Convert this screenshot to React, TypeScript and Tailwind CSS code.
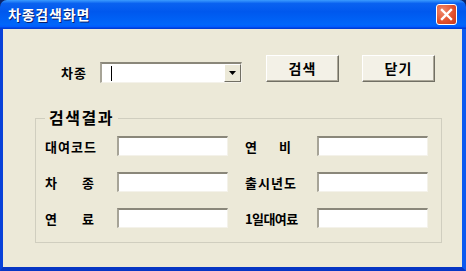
import React from "react";

const font = { fontFamily: '"Noto Sans CJK KR", "Noto Sans", sans-serif' };

function Input() {
  return (
    <div className="h-[20px] w-[111px] bg-white border-t-2 border-l-2 border-b border-r border-t-[#8a877a] border-l-[#a7a497] border-b-[#f4f2ea] border-r-[#f4f2ea]" />
  );
}

function Btn({ label }: { label: string }) {
  return (
    <div className="w-[73px] h-[27px] flex items-center justify-center bg-[#F3F1E7] border border-t-white border-l-white border-b-[#716F64] border-r-[#716F64] shadow-[inset_-1px_-1px_0_#ACA899] text-[14px] font-bold text-black tracking-[1px]">
      {label}
    </div>
  );
}

function Label({ children, tight }: { children: React.ReactNode; tight?: boolean }) {
  return (
    <div
      className={
        "text-[13px] font-bold text-black leading-none whitespace-pre " +
        (tight ? "tracking-[-0.6px]" : "tracking-[1px]")
      }
    >
      {children}
    </div>
  );
}

function Split({ a, b, gap }: { a: string; b: string; gap: string }) {
  return (
    <div className="flex text-[13px] font-bold text-black leading-none">
      <span>{a}</span>
      <span className={gap}>{b}</span>
    </div>
  );
}

export default function App() {
  return (
    <div className="w-[466px] h-[271px] flex flex-col bg-[#0A246A] overflow-hidden" style={font}>
      <div className="h-[29px] flex items-center justify-between pl-[8px] pr-[9px] rounded-t-[7px] bg-[linear-gradient(180deg,#3B9CFF_0%,#0A62F0_12%,#0058EE_40%,#0066FA_85%,#005BFF_92%,#003DD7_97%,#003DD7_100%)]">
        <div className="text-white text-[14px] font-bold tracking-[0.8px] [text-shadow:1px_1px_0_#0A1E6A]">
          차종검색화면
        </div>
        <div className="w-[21px] h-[21px] rounded-[3px] border border-white bg-[radial-gradient(circle_at_30%_30%,#F08A6E,#E14E2A_60%,#C6381B)] flex items-center justify-center">
          <svg width="13" height="13" viewBox="0 0 13 13">
            <path d="M2 2 L11 11 M11 2 L2 11" stroke="white" strokeWidth="2.4" strokeLinecap="square" />
          </svg>
        </div>
      </div>
      <div className="flex-1 flex flex-col bg-[#ECE9D8] border-l-[3px] border-r-[4px] border-b-[4px] border-l-[#0841D9] border-r-[#0B5AF0] border-b-[#0736C4]">
        <div className="flex items-start pt-[26px] pl-[58px]">
          <div className="flex items-center mt-[7px] h-[21px]">
            <Label>차종</Label>
          </div>
          <div className="ml-[13px] mt-[7px] w-[142px] h-[21px] flex bg-white border-t-2 border-l-2 border-b border-r border-t-[#8a877a] border-l-[#a7a497] border-b-[#f4f2ea] border-r-[#f4f2ea]">
            <div className="flex-1 flex items-center pl-[9px]">
              <div className="w-[1px] h-[15px] bg-black" />
            </div>
            <div className="w-[17px] h-full bg-[#ECE9D8] border border-t-white border-l-white border-b-[#716F64] border-r-[#716F64] flex items-center justify-center">
              <svg width="7" height="4" viewBox="0 0 7 4">
                <path d="M0 0 H7 L3.5 4 Z" fill="black" />
              </svg>
            </div>
          </div>
          <div className="ml-[24px]">
            <Btn label="검색" />
          </div>
          <div className="ml-[23px]">
            <Btn label="닫기" />
          </div>
        </div>
        <div className="relative ml-[32px] mt-[35px] w-[407px] h-[125px] border border-[#D0CEBF]">
          <div className="absolute left-[9px] top-[-13px] px-[4px] bg-[#ECE9D8] text-[16px] font-bold text-black tracking-[1.5px] leading-[22px]">
            검색결과
          </div>
          <div className="grid grid-cols-[72px_111px_17px_72px_111px] gap-y-[16px] pl-[9px] pt-[17px] items-center">
            <Label>대여코드</Label>
            <Input />
            <div />
            <Split a="연" b="비" gap="ml-[22px]" />
            <Input />
            <Split a="차" b="종" gap="ml-[25px]" />
            <Input />
            <div />
            <Label>출시년도</Label>
            <Input />
            <Split a="연" b="료" gap="ml-[25px]" />
            <Input />
            <div />
            <Label tight>1일대여료</Label>
            <Input />
          </div>
        </div>
      </div>
    </div>
  );
}
